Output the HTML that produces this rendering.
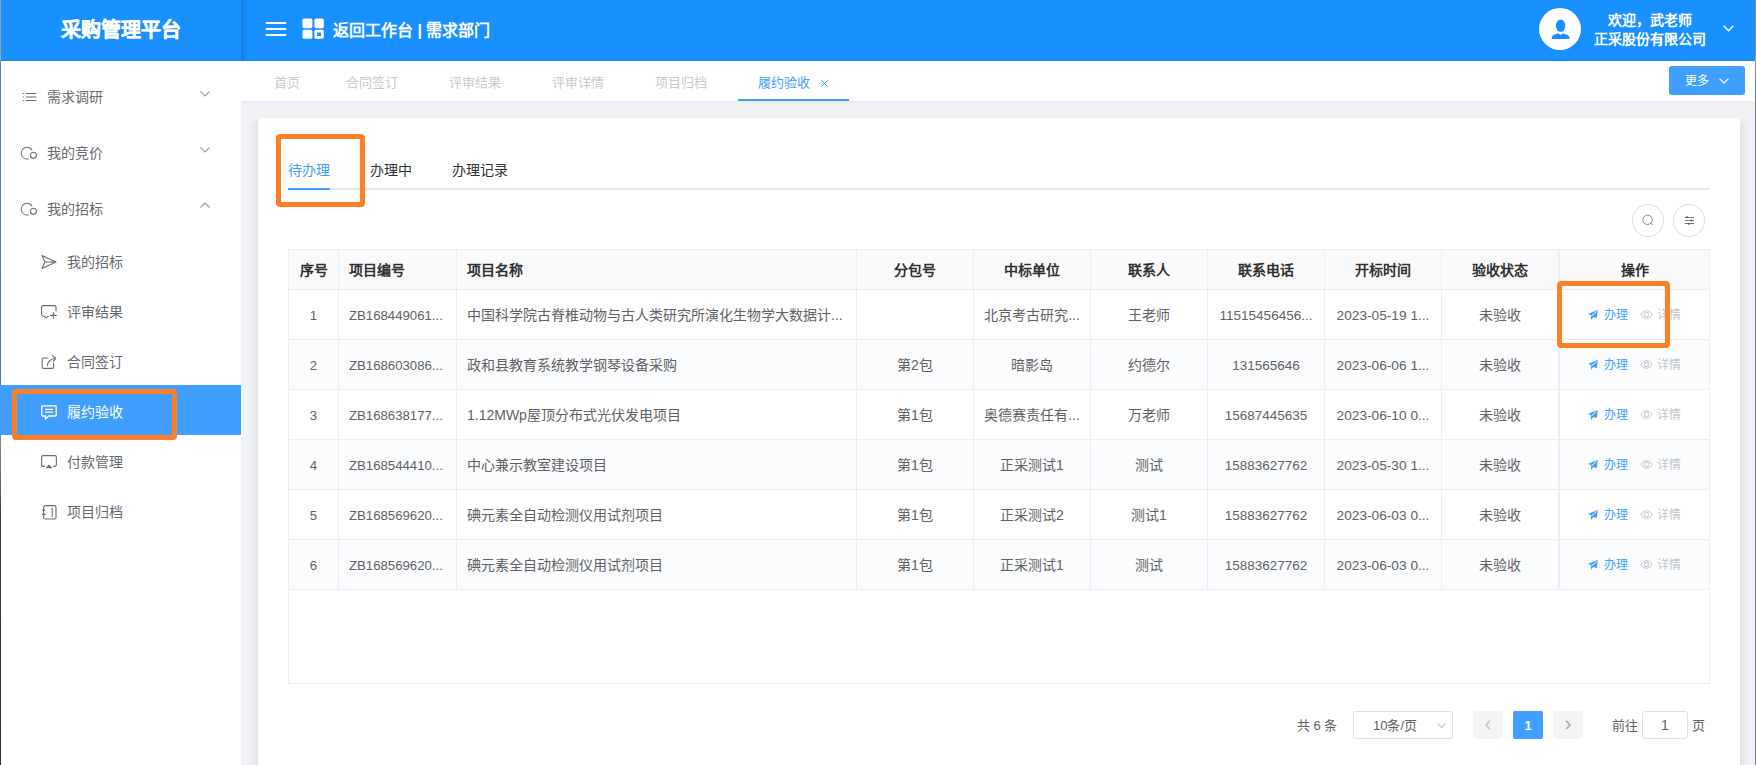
<!DOCTYPE html>
<html lang="zh-CN"><head>
<meta charset="utf-8">
<title>采购管理平台</title>
<style>
*{box-sizing:border-box;margin:0;padding:0}
html,body{width:1756px;height:765px;overflow:hidden;background:#f0f2f5;font-family:"Liberation Sans",sans-serif;font-size:14px;color:#606266}
.abs{position:absolute}
.j{display:inline-block;text-align-last:justify;white-space:nowrap}
#edgeL{position:absolute;left:0;top:0;width:1px;height:765px;background:linear-gradient(#9aa3ab 0,#9aa3ab 61px,#4c8db8 61px,#3f7fb3 385px,#409eff 385px,#409eff 435px,#8a8782 435px,#6a6a6c 480px,#38393d 520px,#303134 765px);z-index:50}
#edgeR{position:absolute;left:1755px;top:0;width:1px;height:765px;background:linear-gradient(#8d969d 0,#8d969d 62px,#9a8470 70px,#6e7f8f 90px,#6d8093 765px);z-index:50}
#header{position:absolute;left:1px;top:0;width:1754px;height:61px;background:#1890ff;border-bottom:1px solid #0a86f8;z-index:10}
#logo{position:absolute;left:0;top:0;width:240px;height:60px;line-height:61px;text-align:center;color:#fff;font-size:20px;font-weight:bold;-webkit-text-stroke:0.4px #fff}
#logoShadow{position:absolute;left:240px;top:0;width:9px;height:61px;background:linear-gradient(90deg,rgba(0,50,130,.24),rgba(0,50,130,.08) 45%,rgba(0,50,130,0))}
#crumb{position:absolute;left:332px;top:0;height:60px;line-height:62px;color:#fff;font-size:16px;font-weight:bold;white-space:nowrap}
#user{position:absolute;left:1569px;top:11px;width:160px;text-align:center;color:#fff;font-weight:bold;font-size:14px;line-height:18.5px;white-space:nowrap}
#avatar{position:absolute;left:1538px;top:8px;width:42px;height:42px;border-radius:50%;background:#fff}
#sidebar{position:absolute;left:1px;top:60px;width:240px;height:705px;background:#fff;z-index:5}
.m1{position:absolute;left:0;width:240px;height:56px;line-height:56px;color:#666a70;font-size:14px}
.m1>span{position:absolute;left:46px;top:2px}
.m2{position:absolute;left:0;width:240px;height:50px;line-height:50px;color:#666a70;font-size:14px}
.m2>span{position:absolute;left:66px;top:2px}
.m2.on{background:#409eff;color:#fff}
svg{position:absolute;overflow:visible}
#tabs{position:absolute;left:241px;top:61px;width:1514px;height:40px;background:#fff;box-shadow:0 1px 3px rgba(0,21,41,.06)}
.tab{position:absolute;top:0;height:40px;line-height:43px;font-size:13px;color:#c6c9cf;white-space:nowrap}
.tab.on{color:#409eff}
#more{position:absolute;left:1669px;top:66px;width:76px;height:29px;border-radius:3px;background:#409eff;color:#fff;font-size:12px;line-height:31px;z-index:6}
#card{position:absolute;left:258px;top:118px;width:1482px;height:660px;background:#fff;border-radius:4px}
.shd{position:absolute;top:117px;width:10px;height:648px;-webkit-mask-image:linear-gradient(transparent,#000 9px);mask-image:linear-gradient(transparent,#000 9px)}
.it{position:absolute;top:160px;height:20px;line-height:20px;font-size:14px;color:#303133;white-space:nowrap}
.hl{position:absolute;border:5px solid #ff7f27;border-radius:4px;z-index:40}
.circ{position:absolute;width:32px;height:33px;border:1px solid #dcdfe6;border-radius:50%;background:#fff}
#tbl{position:absolute;left:288px;top:249px;width:1422px;height:435px;border:1px solid #ebeef5;background:#fff}
.row{position:absolute;left:0;width:1420px;border-bottom:1px solid #ebeef5}
.row.h{top:0;height:40px;background:#fafafa;color:#303133;font-weight:bold;line-height:41px}
.row.d{height:50px;line-height:51px;color:#606266}
.row.d .c1,.row.d .c2{font-size:13.2px}.row.d .c7{font-size:13.5px}.row.d .c8{font-size:13.7px}
.row.s{background:#fbfcfd}
.c{position:absolute;top:0;height:100%;border-right:1px solid #ebeef5;text-align:center;white-space:nowrap;overflow:hidden;font-size:14px}
.c.l{text-align:left;padding-left:10px}
.c1{left:0;width:50px}.c2{left:50px;width:118px}.c3{left:168px;width:400px}.c4{left:568px;width:117px}.c5{left:685px;width:117px}
.c6{left:802px;width:117px}.c7{left:919px;width:117px}.c8{left:1036px;width:117px}.c9{left:1153px;width:117px}.c10{left:1270px;width:150px;border-right:0;border-left:1px solid #ebeef5}
.op1{position:absolute;left:44px;color:#409eff;font-size:12px}
.op2{position:absolute;left:97px;color:#c0c4cc;font-size:12px}
.pg{position:absolute;font-size:13px;color:#606266;white-space:nowrap}
</style>
</head>
<body>
<div id="edgeL"></div><div id="edgeR"></div>
<div id="header">
  <div id="logo"><span class="j" style="width: 120px;">采购管理平台</span></div>
  <div id="logoShadow"></div>
  <svg style="left:265px;top:21px" width="20" height="16" viewBox="0 0 20 16"><path d="M0.6 2H19.4M0.6 8H19.4M0.6 14H19.4" stroke="#fff" stroke-width="2" stroke-linecap="round" fill="none"></path></svg>
  <svg style="left:301px;top:18px" width="22" height="21" viewBox="0 0 22 21" fill="#fff"><rect x="0.4" y="0.6" width="10" height="9.6" rx="1.6"></rect><rect x="12.4" y="0.6" width="9.4" height="9.6" rx="1.6"></rect><rect x="0.4" y="11.8" width="10" height="9" rx="1.6"></rect><path fill-rule="evenodd" d="M14 11.8h6.2a1.6 1.6 0 0 1 1.6 1.6v5.8a1.6 1.6 0 0 1-1.6 1.6H14a1.6 1.6 0 0 1-1.6-1.6v-5.8a1.6 1.6 0 0 1 1.6-1.6ZM15.2 14.6v3.4h3.8v-3.4Z"></path></svg>
  <div id="crumb"><span class="j" style="width: 157.38px;">返回工作台 | 需求部门</span></div>
  <div id="avatar"><svg style="left:12px;top:11px" width="19" height="20" viewBox="0 0 19 20" fill="#1890ff"><ellipse cx="9.6" cy="6.8" rx="4.7" ry="6.2"></ellipse><path d="M0.6 20Q0.6 16 4.6 15.2L7.4 14.2L9.6 16L11.8 14.2L14.6 15.2Q18.6 16 18.6 20Z"></path></svg></div>
  <svg style="left:1722px;top:25px" width="11" height="7" viewBox="0 0 11 7" fill="none" stroke="#fff" stroke-width="1.3"><path d="M0.6 0.8L5.5 5.8L10.4 0.8"></path></svg>
  <div id="user"><span class="j" style="width: 84px;">欢迎，武老师</span><br><span class="j" style="width: 112px;">正采股份有限公司</span></div>
</div>
<div id="sidebar">
  <div class="m1" style="top:7px"><svg style="left:21px;top:25px" width="15" height="10" viewBox="0 0 15 10" fill="none" stroke="#6a6d72" stroke-width="1"><path d="M0.6 1.5h1.2M3.8 1.5H14.4M0.6 5h1.2M3.8 5H14.4M0.6 8.5h1.2M3.8 8.5H14.4"></path></svg><span><span class="j" style="width: 56px;">需求调研</span></span>
    <svg style="left:199px;top:24px" width="10" height="6" viewBox="0 0 10 6" fill="none" stroke="#989ba1" stroke-width="1.1"><path d="M0.5 0.5L5 5L9.5 0.5"></path></svg></div>
  <div class="m1" style="top:63px"><svg style="left:19px;top:24px" width="18" height="14" viewBox="0 0 18 14" fill="none" stroke="#6e7176" stroke-width="1.1"><path d="M12.1 3.2A5.8 5.8 0 1 0 8.6 11.7"></path><circle cx="13.4" cy="8.3" r="3"></circle></svg><span><span class="j" style="width: 56px;">我的竞价</span></span>
    <svg style="left:199px;top:24px" width="10" height="6" viewBox="0 0 10 6" fill="none" stroke="#989ba1" stroke-width="1.1"><path d="M0.5 0.5L5 5L9.5 0.5"></path></svg></div>
  <div class="m1" style="top:119px"><svg style="left:19px;top:24px" width="18" height="14" viewBox="0 0 18 14" fill="none" stroke="#6e7176" stroke-width="1.1"><path d="M12.1 3.2A5.8 5.8 0 1 0 8.6 11.7"></path><circle cx="13.4" cy="8.3" r="3"></circle></svg><span><span class="j" style="width: 56px;">我的招标</span></span>
    <svg style="left:199px;top:23px" width="10" height="6" viewBox="0 0 10 6" fill="none" stroke="#989ba1" stroke-width="1.1"><path d="M0.5 5.5L5 1L9.5 5.5"></path></svg></div>
  <div class="m2" style="top:175px"><svg style="left:40px;top:20px" width="16" height="14" viewBox="0 0 16 14" fill="none" stroke="#6a6d72" stroke-width="1.1" stroke-linejoin="round"><path d="M1 0.6L15 7L1 13.4L4 7Z M4 7H15"></path></svg><span><span class="j" style="width: 56px;">我的招标</span></span></div>
  <div class="m2" style="top:225px"><svg style="left:40px;top:20px" width="16" height="14" viewBox="0 0 16 14" fill="none" stroke="#6a6d72" stroke-width="1.1" stroke-linecap="round"><path d="M15 6V2.2Q15 0.6 13.4 0.6H2.2Q0.6 0.6 0.6 2.2V9.6Q0.6 11.2 2.2 11.2H3.6L5.2 13L6.8 11.2H7.6M9.6 10.4H15.2M12.4 7.6V13.2"></path></svg><span><span class="j" style="width: 56px;">评审结果</span></span></div>
  <div class="m2" style="top:275px"><svg style="left:40px;top:20px" width="16" height="14" viewBox="0 0 16 14" fill="none" stroke="#6a6d72" stroke-width="1.1" stroke-linecap="round" stroke-linejoin="round"><path d="M7 3H2.4Q1.2 3 1.2 4.2V12.2Q1.2 13.4 2.4 13.4H11.4Q12.6 13.4 12.6 12.2V8.4M6.4 10.6Q6.8 4.4 14.6 3.2M11.4 0.6L14.8 3.2L12.4 6.4"></path></svg><span><span class="j" style="width: 56px;">合同签订</span></span></div>
  <div class="m2 on" style="top:325px"><svg style="left:40px;top:20px" width="16" height="15" viewBox="0 0 16 15" fill="none" stroke="#fff" stroke-width="1.3" stroke-linejoin="round"><path d="M1.6 0.8H14.4Q15.2 0.8 15.2 1.6V10.2Q15.2 11 14.4 11H7.6L4.4 14V11H1.6Q0.8 11 0.8 10.2V1.6Q0.8 0.8 1.6 0.8ZM4 4.4H12M4 7.2H12"></path></svg><span><span class="j" style="width: 56px;">履约验收</span></span></div>
  <div class="m2" style="top:375px"><svg style="left:40px;top:20px" width="16" height="14" viewBox="0 0 16 14" stroke="#6a6d72" stroke-width="1.1" fill="none" stroke-linecap="round"><path d="M3.4 11.4H2.2Q0.6 11.4 0.6 9.8V2.2Q0.6 0.6 2.2 0.6H13.8Q15.4 0.6 15.4 2.2V9.8Q15.4 11.4 13.8 11.4H12.6"></path><path d="M8 9.6L11.6 13.2H4.4Z" fill="#6a6d72" stroke="none"></path></svg><span><span class="j" style="width: 56px;">付款管理</span></span></div>
  <div class="m2" style="top:425px"><svg style="left:41px;top:20px" width="15" height="15" viewBox="0 0 15 15" fill="none" stroke="#6a6d72" stroke-width="1.1" stroke-linecap="round"><rect x="1.6" y="0.6" width="12.4" height="13.4" rx="1.6"></rect><path d="M0.4 5H3.2M0.4 9.4H3.2M10.2 3V11.6"></path></svg><span><span class="j" style="width: 56px;">项目归档</span></span></div>
</div>
<div id="tabs">
  <div class="tab" style="left:33px"><span class="j" style="width: 26px;">首页</span></div>
  <div class="tab" style="left:105px"><span class="j" style="width: 52px;">合同签订</span></div>
  <div class="tab" style="left:208px"><span class="j" style="width: 52px;">评审结果</span></div>
  <div class="tab" style="left:311px"><span class="j" style="width: 52px;">评审详情</span></div>
  <div class="tab" style="left:414px"><span class="j" style="width: 52px;">项目归档</span></div>
  <div class="tab on" style="left:517px"><span class="j" style="width: 52px;">履约验收</span></div>
  <svg style="left:580px;top:19px" width="7" height="7" viewBox="0 0 7 7" fill="none" stroke="#409eff" stroke-width="1"><path d="M0.4 0.4L6.6 6.6M6.6 0.4L0.4 6.6"></path></svg>
  <div class="abs" style="left:497px;top:38px;width:111px;height:2px;background:#409eff"></div>
</div>
<div id="more"><span class="abs" style="left:16px;top:0"><span class="j" style="width: 24px;">更多</span></span><svg style="left:50px;top:12px" width="10" height="6" viewBox="0 0 10 6" fill="none" stroke="#fff" stroke-width="1.2"><path d="M0.5 0.6L5 5L9.5 0.6"></path></svg></div>
<div class="shd" style="left:248px;background:linear-gradient(90deg,rgba(70,80,100,0),rgba(70,80,100,.02) 30%,rgba(70,80,100,.085))"></div><div class="shd" style="left:1740px;background:linear-gradient(270deg,rgba(70,80,100,0),rgba(70,80,100,.02) 30%,rgba(70,80,100,.085))"></div>
<div id="card"></div>
<div class="it" style="left:288px;color:#409eff"><span class="j" style="width: 42px;">待办理</span></div>
<div class="it" style="left:370px"><span class="j" style="width: 42px;">办理中</span></div>
<div class="it" style="left:452px"><span class="j" style="width: 56px;">办理记录</span></div>
<div class="abs" style="left:288px;top:188px;width:1422px;height:2px;background:#e4e7ed"></div>
<div class="abs" style="left:288px;top:188px;width:42px;height:2px;background:#409eff"></div>
<div class="hl" style="left:276px;top:134px;width:89px;height:73px"></div>
<div class="hl" style="left:12px;top:389px;width:165px;height:51px"></div>
<div class="hl" style="left:1557px;top:281px;width:113px;height:67px"></div>
<div class="circ" style="left:1632px;top:204px"><svg style="left:9px;top:9px" width="13" height="13" viewBox="0 0 13 13" fill="none" stroke="#74777d" stroke-width="0.9"><circle cx="5.6" cy="5.8" r="4.7"></circle><path d="M9 9.2L10.7 10.9"></path></svg></div>
<div class="circ" style="left:1673px;top:204px"><svg style="left:10px;top:11px" width="11" height="10" viewBox="0 0 11 10" fill="none" stroke="#6a6d73" stroke-width="0.9"><path d="M0.6 1.5H10M0.6 4.5H10M0.6 7.5H10"></path><circle cx="3.2" cy="1.3" r="1" fill="#55585e" stroke="none"></circle><circle cx="7.2" cy="4.6" r="1" fill="#55585e" stroke="none"></circle><circle cx="4.8" cy="7.8" r="1" fill="#55585e" stroke="none"></circle></svg></div>
<div id="tbl">
<div class="row h"><div class="c c1"><span class="j" style="width: 28px;">序号</span></div><div class="c c2 l"><span class="j" style="width: 56px;">项目编号</span></div><div class="c c3 l"><span class="j" style="width: 56px;">项目名称</span></div><div class="c c4"><span class="j" style="width: 42px;">分包号</span></div><div class="c c5"><span class="j" style="width: 56px;">中标单位</span></div><div class="c c6"><span class="j" style="width: 42px;">联系人</span></div><div class="c c7"><span class="j" style="width: 56px;">联系电话</span></div><div class="c c8"><span class="j" style="width: 56px;">开标时间</span></div><div class="c c9"><span class="j" style="width: 56px;">验收状态</span></div><div class="c c10"><span class="j" style="width: 28px;">操作</span></div></div>
<div class="row d" style="top:40px"><div class="c c1">1</div><div class="c c2 l">ZB168449061...</div><div class="c c3 l"><span class="j" style="width: 375.67px;">中国科学院古脊椎动物与古人类研究所演化生物学大数据计...</span></div><div class="c c4"></div><div class="c c5"><span class="j" style="width: 95.67px;">北京考古研究...</span></div><div class="c c6"><span class="j" style="width: 42px;">王老师</span></div><div class="c c7">11515456456...</div><div class="c c8">2023-05-19 1...</div><div class="c c9"><span class="j" style="width: 42px;">未验收</span></div><div class="c c10"><svg style="left:28px;top:20px" width="10" height="10" viewBox="0 0 10 10" fill="#409eff"><path d="M9.8 0.1L0.2 3.8L2.9 5.3L3.1 9.9L5.3 7.1L8.7 8.1Z"></path><path d="M3.1 5.6L8.4 1.6L3.6 6.4" fill="none" stroke="#fff" stroke-width="0.55"></path></svg><span class="op1"><span class="j" style="width: 24px;">办理</span></span><svg style="left:80px;top:20px" width="13" height="9" viewBox="0 0 13 9" fill="none" stroke="#c0c4cc" stroke-width="1"><path d="M0.6 4.5Q3.2 0.6 6.5 0.6T12.4 4.5Q9.8 8.4 6.5 8.4T0.6 4.5Z"></path><circle cx="6.5" cy="4.5" r="2.3"></circle></svg><span class="op2"><span class="j" style="width: 24px;">详情</span></span></div></div>
<div class="row d s" style="top:90px"><div class="c c1">2</div><div class="c c2 l">ZB168603086...</div><div class="c c3 l"><span class="j" style="width: 210px;">政和县教育系统教学钢琴设备采购</span></div><div class="c c4"><span class="j" style="width: 35.8px;">第2包</span></div><div class="c c5"><span class="j" style="width: 42px;">暗影岛</span></div><div class="c c6"><span class="j" style="width: 42px;">约德尔</span></div><div class="c c7">131565646</div><div class="c c8">2023-06-06 1...</div><div class="c c9"><span class="j" style="width: 42px;">未验收</span></div><div class="c c10"><svg style="left:28px;top:20px" width="10" height="10" viewBox="0 0 10 10" fill="#409eff"><path d="M9.8 0.1L0.2 3.8L2.9 5.3L3.1 9.9L5.3 7.1L8.7 8.1Z"></path><path d="M3.1 5.6L8.4 1.6L3.6 6.4" fill="none" stroke="#fff" stroke-width="0.55"></path></svg><span class="op1"><span class="j" style="width: 24px;">办理</span></span><svg style="left:80px;top:20px" width="13" height="9" viewBox="0 0 13 9" fill="none" stroke="#c0c4cc" stroke-width="1"><path d="M0.6 4.5Q3.2 0.6 6.5 0.6T12.4 4.5Q9.8 8.4 6.5 8.4T0.6 4.5Z"></path><circle cx="6.5" cy="4.5" r="2.3"></circle></svg><span class="op2"><span class="j" style="width: 24px;">详情</span></span></div></div>
<div class="row d" style="top:140px"><div class="c c1">3</div><div class="c c2 l">ZB168638177...</div><div class="c c3 l"><span class="j" style="width: 213.92px;">1.12MWp屋顶分布式光伏发电项目</span></div><div class="c c4"><span class="j" style="width: 35.8px;">第1包</span></div><div class="c c5"><span class="j" style="width: 95.67px;">奥德赛责任有...</span></div><div class="c c6"><span class="j" style="width: 42px;">万老师</span></div><div class="c c7">15687445635</div><div class="c c8">2023-06-10 0...</div><div class="c c9"><span class="j" style="width: 42px;">未验收</span></div><div class="c c10"><svg style="left:28px;top:20px" width="10" height="10" viewBox="0 0 10 10" fill="#409eff"><path d="M9.8 0.1L0.2 3.8L2.9 5.3L3.1 9.9L5.3 7.1L8.7 8.1Z"></path><path d="M3.1 5.6L8.4 1.6L3.6 6.4" fill="none" stroke="#fff" stroke-width="0.55"></path></svg><span class="op1"><span class="j" style="width: 24px;">办理</span></span><svg style="left:80px;top:20px" width="13" height="9" viewBox="0 0 13 9" fill="none" stroke="#c0c4cc" stroke-width="1"><path d="M0.6 4.5Q3.2 0.6 6.5 0.6T12.4 4.5Q9.8 8.4 6.5 8.4T0.6 4.5Z"></path><circle cx="6.5" cy="4.5" r="2.3"></circle></svg><span class="op2"><span class="j" style="width: 24px;">详情</span></span></div></div>
<div class="row d s" style="top:190px"><div class="c c1">4</div><div class="c c2 l">ZB168544410...</div><div class="c c3 l"><span class="j" style="width: 140px;">中心兼示教室建设项目</span></div><div class="c c4"><span class="j" style="width: 35.8px;">第1包</span></div><div class="c c5"><span class="j" style="width: 63.8px;">正采测试1</span></div><div class="c c6"><span class="j" style="width: 28px;">测试</span></div><div class="c c7">15883627762</div><div class="c c8">2023-05-30 1...</div><div class="c c9"><span class="j" style="width: 42px;">未验收</span></div><div class="c c10"><svg style="left:28px;top:20px" width="10" height="10" viewBox="0 0 10 10" fill="#409eff"><path d="M9.8 0.1L0.2 3.8L2.9 5.3L3.1 9.9L5.3 7.1L8.7 8.1Z"></path><path d="M3.1 5.6L8.4 1.6L3.6 6.4" fill="none" stroke="#fff" stroke-width="0.55"></path></svg><span class="op1"><span class="j" style="width: 24px;">办理</span></span><svg style="left:80px;top:20px" width="13" height="9" viewBox="0 0 13 9" fill="none" stroke="#c0c4cc" stroke-width="1"><path d="M0.6 4.5Q3.2 0.6 6.5 0.6T12.4 4.5Q9.8 8.4 6.5 8.4T0.6 4.5Z"></path><circle cx="6.5" cy="4.5" r="2.3"></circle></svg><span class="op2"><span class="j" style="width: 24px;">详情</span></span></div></div>
<div class="row d" style="top:240px"><div class="c c1">5</div><div class="c c2 l">ZB168569620...</div><div class="c c3 l"><span class="j" style="width: 196px;">碘元素全自动检测仪用试剂项目</span></div><div class="c c4"><span class="j" style="width: 35.8px;">第1包</span></div><div class="c c5"><span class="j" style="width: 63.8px;">正采测试2</span></div><div class="c c6"><span class="j" style="width: 35.8px;">测试1</span></div><div class="c c7">15883627762</div><div class="c c8">2023-06-03 0...</div><div class="c c9"><span class="j" style="width: 42px;">未验收</span></div><div class="c c10"><svg style="left:28px;top:20px" width="10" height="10" viewBox="0 0 10 10" fill="#409eff"><path d="M9.8 0.1L0.2 3.8L2.9 5.3L3.1 9.9L5.3 7.1L8.7 8.1Z"></path><path d="M3.1 5.6L8.4 1.6L3.6 6.4" fill="none" stroke="#fff" stroke-width="0.55"></path></svg><span class="op1"><span class="j" style="width: 24px;">办理</span></span><svg style="left:80px;top:20px" width="13" height="9" viewBox="0 0 13 9" fill="none" stroke="#c0c4cc" stroke-width="1"><path d="M0.6 4.5Q3.2 0.6 6.5 0.6T12.4 4.5Q9.8 8.4 6.5 8.4T0.6 4.5Z"></path><circle cx="6.5" cy="4.5" r="2.3"></circle></svg><span class="op2"><span class="j" style="width: 24px;">详情</span></span></div></div>
<div class="row d s" style="top:290px"><div class="c c1">6</div><div class="c c2 l">ZB168569620...</div><div class="c c3 l"><span class="j" style="width: 196px;">碘元素全自动检测仪用试剂项目</span></div><div class="c c4"><span class="j" style="width: 35.8px;">第1包</span></div><div class="c c5"><span class="j" style="width: 63.8px;">正采测试1</span></div><div class="c c6"><span class="j" style="width: 28px;">测试</span></div><div class="c c7">15883627762</div><div class="c c8">2023-06-03 0...</div><div class="c c9"><span class="j" style="width: 42px;">未验收</span></div><div class="c c10"><svg style="left:28px;top:20px" width="10" height="10" viewBox="0 0 10 10" fill="#409eff"><path d="M9.8 0.1L0.2 3.8L2.9 5.3L3.1 9.9L5.3 7.1L8.7 8.1Z"></path><path d="M3.1 5.6L8.4 1.6L3.6 6.4" fill="none" stroke="#fff" stroke-width="0.55"></path></svg><span class="op1"><span class="j" style="width: 24px;">办理</span></span><svg style="left:80px;top:20px" width="13" height="9" viewBox="0 0 13 9" fill="none" stroke="#c0c4cc" stroke-width="1"><path d="M0.6 4.5Q3.2 0.6 6.5 0.6T12.4 4.5Q9.8 8.4 6.5 8.4T0.6 4.5Z"></path><circle cx="6.5" cy="4.5" r="2.3"></circle></svg><span class="op2"><span class="j" style="width: 24px;">详情</span></span></div></div>
</div>

<div class="pg" style="left:1297px;top:715px"><span class="j" style="width: 40.47px;">共 6 条</span></div>
<div class="abs" style="left:1353px;top:711px;width:100px;height:28px;border:1px solid #dcdfe6;border-radius:3px;background:#fff"><span class="pg" style="left:19px;top:3px"><span class="j" style="width: 44.08px;">10条/页</span></span><svg style="left:83px;top:11px" width="9" height="5" viewBox="0 0 9 5" fill="none" stroke="#c0c4cc" stroke-width="1.1"><path d="M0.5 0.5L4.5 4.4L8.5 0.5"></path></svg></div>
<div class="abs" style="left:1473px;top:711px;width:30px;height:28px;border-radius:2px;background:#f4f4f5"><svg style="left:12px;top:9px" width="6" height="10" viewBox="0 0 6 10" fill="none" stroke="#c0c4cc" stroke-width="1.6"><path d="M5 0.8L1 5L5 9.2"></path></svg></div>
<div class="abs" style="left:1513px;top:711px;width:30px;height:28px;border-radius:2px;background:#409eff;color:#fff;font-weight:bold;font-size:13px;line-height:29px;text-align:center">1</div>
<div class="abs" style="left:1553px;top:711px;width:30px;height:28px;border-radius:2px;background:#f4f4f5"><svg style="left:12px;top:9px" width="6" height="10" viewBox="0 0 6 10" fill="none" stroke="#a4a7ae" stroke-width="1.6"><path d="M1 0.8L5 5L1 9.2"></path></svg></div>
<div class="pg" style="left:1612px;top:715px"><span class="j" style="width: 26px;">前往</span></div>
<div class="abs" style="left:1642px;top:711px;width:46px;height:28px;border:1px solid #dcdfe6;border-radius:3px;background:#fff;text-align:center;font-size:14px;line-height:27px;color:#606266">1</div>
<div class="pg" style="left:1692px;top:715px"><span class="j" style="width: 13px;">页</span></div>


</body></html>
